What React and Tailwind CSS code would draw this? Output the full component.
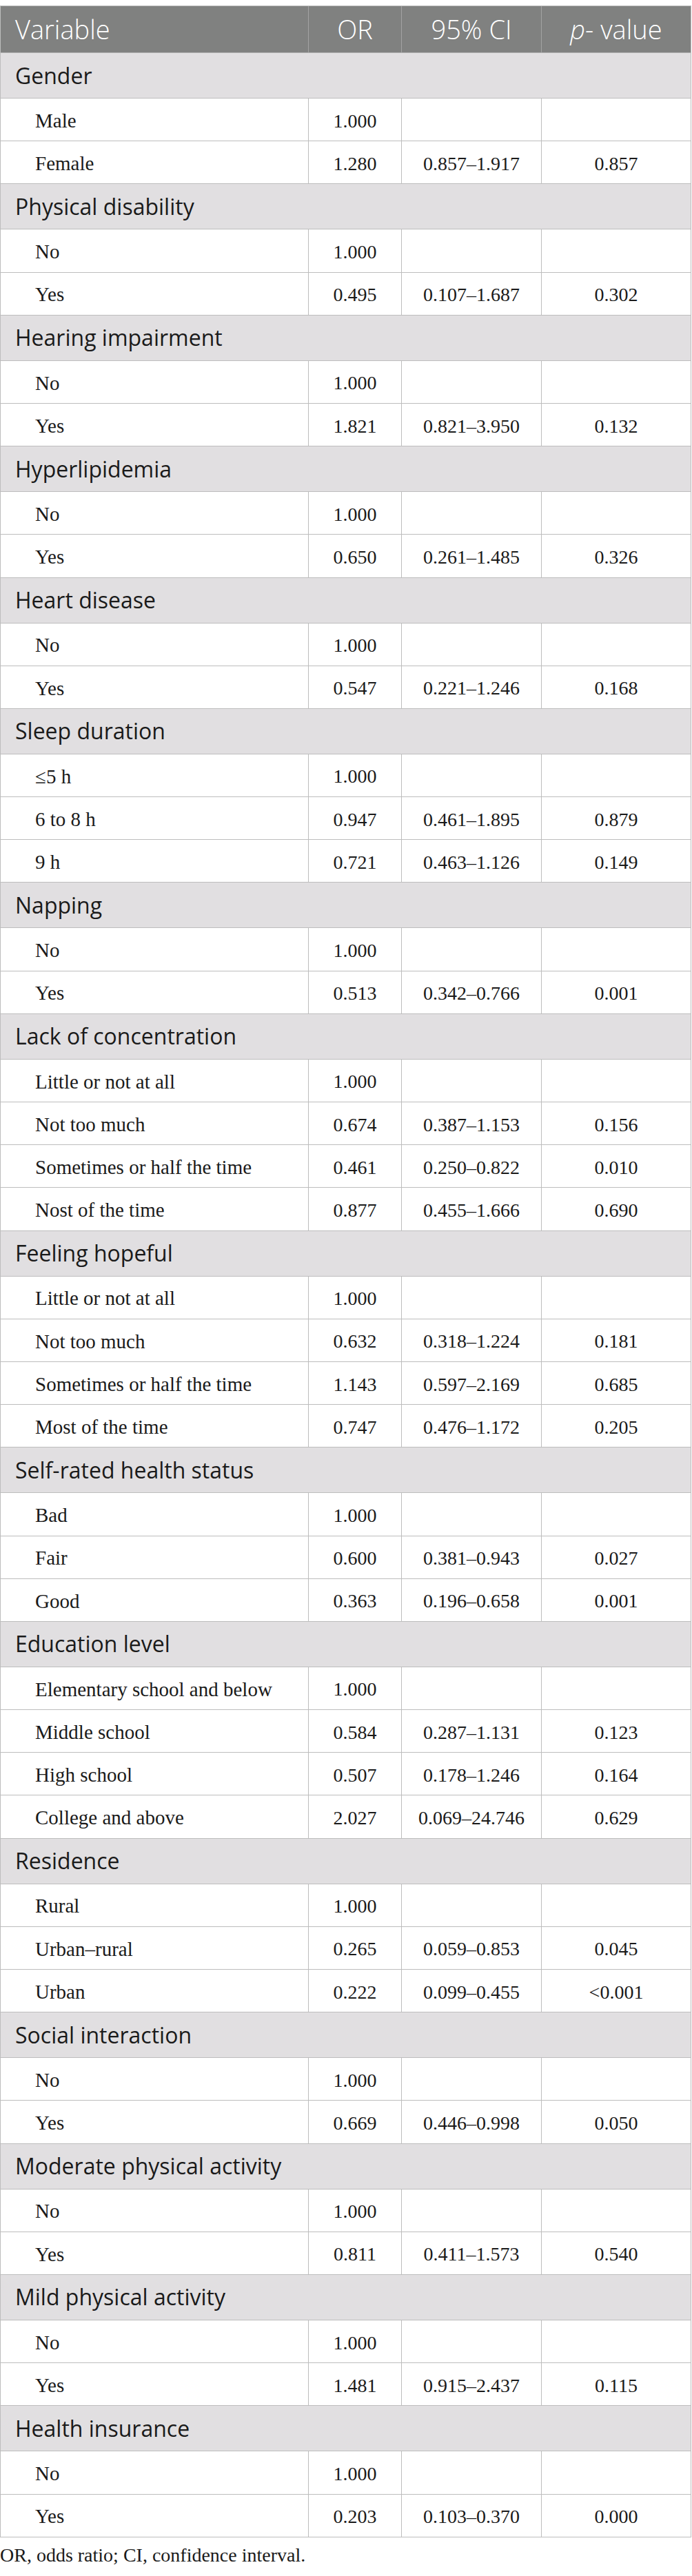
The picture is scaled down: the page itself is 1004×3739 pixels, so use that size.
const groups = [
  ['Gender', [['Male', '1.000', '', ''], ['Female', '1.280', '0.857–1.917', '0.857']]],
  ['Physical disability', [['No', '1.000', '', ''], ['Yes', '0.495', '0.107–1.687', '0.302']]],
  ['Hearing impairment', [['No', '1.000', '', ''], ['Yes', '1.821', '0.821–3.950', '0.132']]],
  ['Hyperlipidemia', [['No', '1.000', '', ''], ['Yes', '0.650', '0.261–1.485', '0.326']]],
  ['Heart disease', [['No', '1.000', '', ''], ['Yes', '0.547', '0.221–1.246', '0.168']]],
  ['Sleep duration', [['≤5 h', '1.000', '', ''], ['6 to 8 h', '0.947', '0.461–1.895', '0.879'], ['9 h', '0.721', '0.463–1.126', '0.149']]],
  ['Napping', [['No', '1.000', '', ''], ['Yes', '0.513', '0.342–0.766', '0.001']]],
  ['Lack of concentration', [
    ['Little or not at all', '1.000', '', ''],
    ['Not too much', '0.674', '0.387–1.153', '0.156'],
    ['Sometimes or half the time', '0.461', '0.250–0.822', '0.010'],
    ['Nost of the time', '0.877', '0.455–1.666', '0.690'],
  ]],
  ['Feeling hopeful', [
    ['Little or not at all', '1.000', '', ''],
    ['Not too much', '0.632', '0.318–1.224', '0.181'],
    ['Sometimes or half the time', '1.143', '0.597–2.169', '0.685'],
    ['Most of the time', '0.747', '0.476–1.172', '0.205'],
  ]],
  ['Self-rated health status', [['Bad', '1.000', '', ''], ['Fair', '0.600', '0.381–0.943', '0.027'], ['Good', '0.363', '0.196–0.658', '0.001']]],
  ['Education level', [
    ['Elementary school and below', '1.000', '', ''],
    ['Middle school', '0.584', '0.287–1.131', '0.123'],
    ['High school', '0.507', '0.178–1.246', '0.164'],
    ['College and above', '2.027', '0.069–24.746', '0.629'],
  ]],
  ['Residence', [['Rural', '1.000', '', ''], ['Urban–rural', '0.265', '0.059–0.853', '0.045'], ['Urban', '0.222', '0.099–0.455', '<0.001']]],
  ['Social interaction', [['No', '1.000', '', ''], ['Yes', '0.669', '0.446–0.998', '0.050']]],
  ['Moderate physical activity', [['No', '1.000', '', ''], ['Yes', '0.811', '0.411–1.573', '0.540']]],
  ['Mild physical activity', [['No', '1.000', '', ''], ['Yes', '1.481', '0.915–2.437', '0.115']]],
  ['Health insurance', [['No', '1.000', '', ''], ['Yes', '0.203', '0.103–0.370', '0.000']]],
];

const sans = "font-['Open_Sans','Noto_Sans',sans-serif]";
const serif = "font-['Liberation_Serif','Times_New_Roman',serif]";

function DataRow({ row }) {
  const [label, or, ci, p] = row;
  return (
    <div className={`flex h-[62.2px] border-b border-[#bdbdbd] bg-white text-[28px] text-[#1a1a1a] ${serif}`}>
      <div className="w-[446px] flex items-center pl-[50px] pt-[4px] text-[29px]">{label}</div>
      <div className="w-[135px] flex items-center justify-center pt-[4px] border-l border-[#bdbdbd]">{or}</div>
      <div className="w-[203px] flex items-center justify-center pt-[4px] border-l border-[#bdbdbd]">{ci}</div>
      <div className="flex-1 flex items-center justify-center pt-[4px] border-l border-[#bdbdbd]">{p}</div>
    </div>
  );
}

export default function App() {
  return (
    <div className="bg-white w-[1004px] pt-2">
      <div className="w-[1003px] border-t border-l border-r border-[#bdbdbd]">
        {/* header */}
        <div className={`flex h-[68px] border-b border-[#b0b0b0] bg-[#808180] text-white text-[38px] font-light ${sans}`}>
          <div className="w-[446px] flex items-center pl-[21px]">Variable</div>
          <div className="w-[135px] flex items-center justify-center border-l border-[#a3a3a3]">OR</div>
          <div className="w-[203px] flex items-center justify-center border-l border-[#a3a3a3]">95% CI</div>
          <div className="flex-1 flex items-center justify-center border-l border-[#a3a3a3]">
            <span><i>p</i>- value</span>
          </div>
        </div>

        {groups.map(([title, rows]) => (
          <div key={title}>
            <div className={`h-[66px] flex items-center pl-[21px] border-b border-[#bdbdbd] bg-[#e1dfe1] text-[32px] text-[#1a1a1a] ${sans}`}>
              {title}
            </div>
            {rows.map(r => <DataRow key={title + r[0]} row={r} />)}
          </div>
        ))}
      </div>
      <p className={`mt-[5px] text-[28px] text-[#1a1a1a] ${serif}`}>OR, odds ratio; CI, confidence interval.</p>
    </div>
  );
}
